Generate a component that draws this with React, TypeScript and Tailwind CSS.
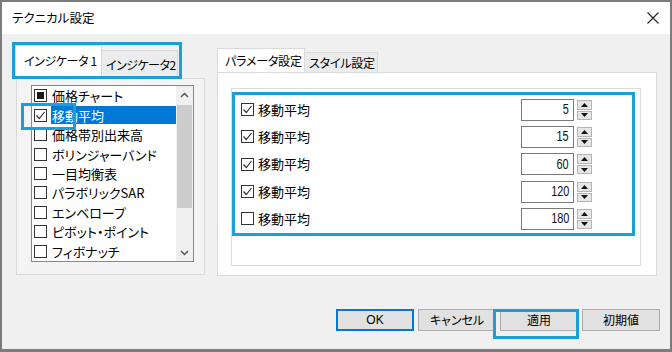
import React from "react";

const jp = "font-['Noto_Sans_CJK_JP','Noto_Sans',sans-serif] [font-feature-settings:'palt']";

const listItems = [
  { label: "価格チャート", state: "fill" },
  { label: "移動平均", state: "check", selected: true },
  { label: "価格帯別出来高", state: "off" },
  { label: "ボリンジャーバンド", state: "off" },
  { label: "一目均衡表", state: "off" },
  { label: "パラボリックSAR", state: "off" },
  { label: "エンベロープ", state: "off" },
  { label: "ピボット・ポイント", state: "off" },
  { label: "フィボナッチ", state: "off" },
];

const params = [
  { value: "5", checked: true },
  { value: "15", checked: true },
  { value: "60", checked: true },
  { value: "120", checked: true },
  { value: "180", checked: false },
];

function CheckBox({ state }: { state: string }) {
  return (
    <span className="flex h-[13px] w-[13px] shrink-0 items-center justify-center border border-[#333333] bg-white">
      {state === "fill" ? <span className="h-[7px] w-[7px] bg-[#1a1a1a]" /> : null}
      {state === "check" ? (
        <svg width="11" height="11" viewBox="0 0 11 11">
          <polyline points="1.5,5.5 4.3,8.5 9.5,2" fill="none" stroke="#333" strokeWidth="1.2" />
        </svg>
      ) : null}
    </span>
  );
}

function Chevron({ up }: { up?: boolean }) {
  return (
    <svg width="9" height="6" viewBox="0 0 9 6">
      <polyline
        points={up ? "1,5 4.5,1.5 8,5" : "1,1 4.5,4.5 8,1"}
        fill="none"
        stroke="#555"
        strokeWidth="1.5"
      />
    </svg>
  );
}

function Spinner({ value }: { value: string }) {
  return (
    <div className="flex items-center gap-[3px]">
      <div className="flex h-[22px] w-[53px] items-center justify-end border border-[#7a7a7a] bg-white pr-[4px] font-['Liberation_Sans',sans-serif] text-[14px] text-[#111]">
        <span className="inline-block origin-right scale-x-[0.78]">{value}</span>
      </div>
      <div className="flex w-[15px] flex-col gap-[1px]">
        <div className="flex h-[10px] items-center justify-center border border-[#b4b4b4] bg-[#e6e6e6]">
          <svg width="7" height="4" viewBox="0 0 7 4">
            <polygon points="0,4 3.5,0 7,4" fill="#111" />
          </svg>
        </div>
        <div className="flex h-[9px] items-center justify-center border border-[#b4b4b4] bg-[#e6e6e6]">
          <svg width="7" height="4" viewBox="0 0 7 4">
            <polygon points="0,0 3.5,4 7,0" fill="#111" />
          </svg>
        </div>
      </div>
    </div>
  );
}

function DlgButton({ label, primary, latin }: { label: string; primary?: boolean; latin?: boolean }) {
  return (
    <button
      type="button"
      className={`flex h-[22px] w-[78px] items-center justify-center bg-[#e1e1e1] text-[12px] text-black ${
        primary ? "border-2 border-[#0078d7]" : "border border-[#adadad]"
      } ${latin ? "font-['Liberation_Sans',sans-serif]" : ""}`}
    >
      {label}
    </button>
  );
}

export default function App() {
  return (
    <div className={`relative flex h-[352px] w-[672px] flex-col border-2 border-b-[3px] border-[#7d7d7d] bg-[#f0f0f0] ${jp} text-black`}>
      {/* title bar */}
      <div className="flex h-[32px] shrink-0 items-center justify-between bg-white pl-[10px] pr-[10px]">
        <span className="text-[12.5px]">テクニカル設定</span>
        <svg width="12" height="12" viewBox="0 0 12 12" className="mr-[1px]">
          <path d="M0.5 0.5 L11.5 11.5 M11.5 0.5 L0.5 11.5" stroke="#222" strokeWidth="1.1" />
        </svg>
      </div>

      {/* content */}
      <div className="flex flex-1 gap-[12px] pl-[14px]">
        {/* left tab control */}
        <div className="mt-[11px] flex w-[189px] flex-col">
          <div className="flex h-[33px] items-end">
            <div className="-ml-[1px] flex h-[33px] w-[87px] items-center overflow-hidden whitespace-nowrap border border-b-0 border-[#d9d9d9] bg-white pb-[3px] pl-[8px] text-[12px] tracking-[-0.4px]">
              インジケータ 1
            </div>
            <div className="flex h-[28px] w-[76px] items-center overflow-hidden whitespace-nowrap border border-b-0 border-l-0 border-[#d9d9d9] bg-[#ececec] pl-[4px] text-[12px] tracking-[-0.5px]">
              インジケータ2
            </div>
          </div>
          <div className="h-[197px] border border-[#d9d9d9] bg-[#f4f4f4] pl-[14px] pt-[6px]">
            <div className="flex h-[177px] w-[163px] border border-[#828790] bg-white">
              <div className="flex flex-1 flex-col">
                {listItems.map((it) => (
                  <div key={it.label} className="flex h-[19.5px] items-center pl-[2px]">
                    <CheckBox state={it.state} />
                    <span
                      className={`ml-[4px] flex h-[18px] flex-1 items-center whitespace-nowrap pl-[1px] text-[13px] leading-none ${
                        it.selected ? "bg-[#0078d7] text-white" : ""
                      }`}
                    >
                      {it.label}
                    </span>
                  </div>
                ))}
              </div>
              <div className="flex w-[17px] flex-col bg-[#f0f0f0]">
                <div className="flex h-[17px] items-center justify-center">
                  <Chevron up />
                </div>
                <div className="flex-1 px-[1px] pt-[2px]">
                  <div className="h-[103px] bg-[#cdcdcd]" />
                </div>
                <div className="flex h-[17px] items-center justify-center">
                  <Chevron />
                </div>
              </div>
            </div>
          </div>
        </div>

        {/* right tab control */}
        <div className="mt-[14px] flex w-[440px] flex-col">
          <div className="flex h-[24px] items-end">
            <div className="flex h-[24px] w-[88px] items-center overflow-hidden whitespace-nowrap border border-b-0 border-[#d9d9d9] bg-white pl-[7px] text-[12px] tracking-[-0.2px]">
              パラメータ設定
            </div>
            <div className="flex h-[20px] w-[73px] items-center overflow-hidden whitespace-nowrap border border-b-0 border-l-0 border-[#d9d9d9] bg-[#ececec] pl-[4px] text-[12px] tracking-[-0.2px]">
              スタイル設定
            </div>
          </div>
          <div className="h-[204px] border border-[#d9d9d9] bg-white pl-[13px] pt-[15px]">
            <div className="flex h-[178px] w-[410px] flex-col border border-[#dcdcdc] bg-white pt-[7px]">
              {params.map((p, i) => (
                <div key={i} className="flex h-[27.3px] items-center pl-[9px] pr-[48px]">
                  <CheckBox state={p.checked ? "check" : "off"} />
                  <span className="ml-[4px] flex-1 text-[13px]">移動平均</span>
                  <Spinner value={p.value} />
                </div>
              ))}
            </div>
          </div>
        </div>
      </div>

      {/* buttons */}
      <div className="flex h-[48px] shrink-0 items-start justify-end gap-[4px] pr-[10px] pt-[8px]">
        <DlgButton label="OK" primary latin />
        <DlgButton label="キャンセル" />
        <DlgButton label="適用" />
        <DlgButton label="初期値" />
      </div>

      {/* annotation highlights */}
      <div className="pointer-events-none absolute left-[10px] top-[40px] h-[37px] w-[170px] border-[3px] border-[#1a9fd8]" />
      <div className="pointer-events-none absolute left-[19px] top-[101px] h-[27px] w-[55px] border-[3px] border-[#1a9fd8]" />
      <div className="pointer-events-none absolute left-[230px] top-[90px] h-[144px] w-[403px] border-[3px] border-[#1a9fd8]" />
      <div className="pointer-events-none absolute left-[491px] top-[307px] h-[30px] w-[86px] border-[3px] border-[#1a9fd8]" />
    </div>
  );
}
